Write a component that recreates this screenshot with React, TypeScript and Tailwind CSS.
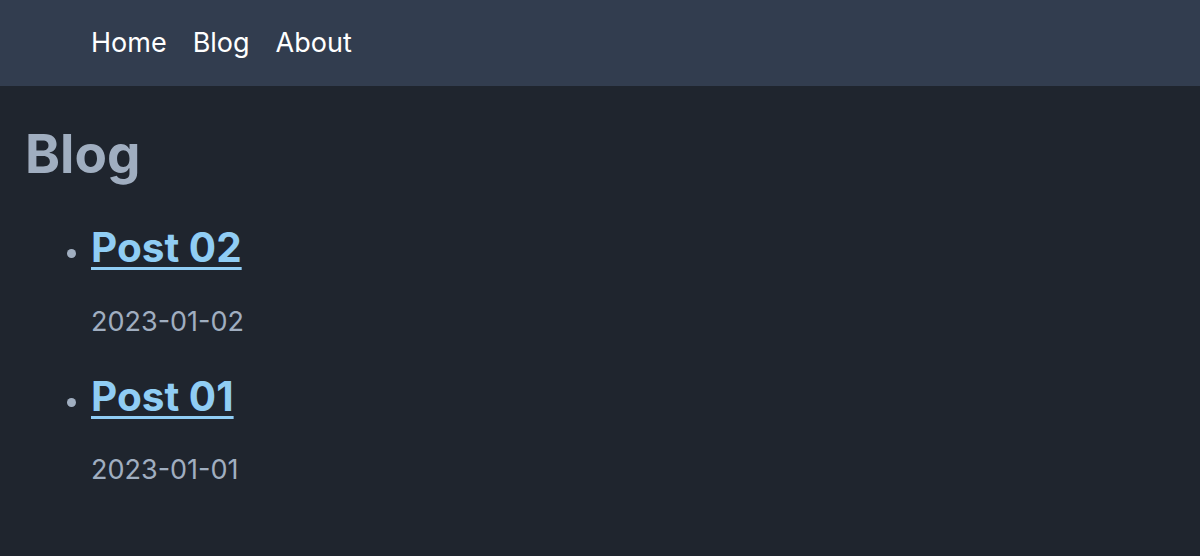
import React from "react";

export default function App() {
  const posts = [
    { title: "Post 02", date: "2023-01-02" },
    { title: "Post 01", date: "2023-01-01" },
  ];
  return (
    <div
      className="min-h-[556px] bg-[#1f252e]"
      style={{ fontFamily: "Inter, 'Noto Sans', sans-serif" }}
    >
      <header className="h-[86px] bg-[#323d4f] flex items-center pl-[91px] gap-[26px] text-[27px] text-white">
        <a href="#">Home</a>
        <a href="#">Blog</a>
        <a href="#">About</a>
      </header>
      <main className="px-[25px]">
        <h1 className="pt-[36px] text-[53px] font-bold leading-[65px] text-[#a0aec0]">
          Blog
        </h1>
        <ul className="mt-[36px] pl-[66px] list-disc marker:text-[#a0aec0] marker:text-[27px]">
          {posts.map((p, i) => (
            <li key={p.title} className={i > 0 ? "mt-[33.6px]" : ""}>
              <h2 className="text-[40.5px] font-bold leading-[49px]">
                <a
                  href="#"
                  className="text-[#90cdf4] underline decoration-[3px] underline-offset-[5px]"
                >
                  {p.title}
                </a>
              </h2>
              <p className="mt-[33.6px] text-[27px] leading-[32.7px] text-[#a0aec0]">
                {p.date}
              </p>
            </li>
          ))}
        </ul>
      </main>
    </div>
  );
}
